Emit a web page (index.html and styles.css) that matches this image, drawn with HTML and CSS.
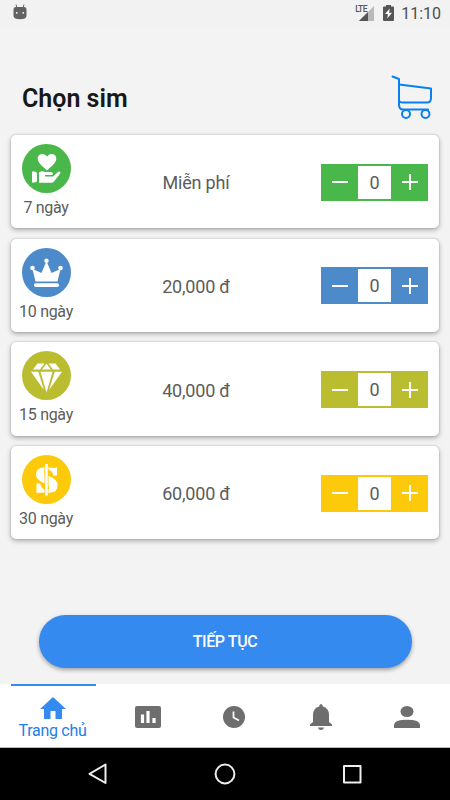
FILE: index.html
```html
<!DOCTYPE html>
<html lang="vi">
<head>
    <meta charset="UTF-8">
    <meta name="viewport" content="width=device-width, initial-scale=1.0">
    <title>Chọn sim</title>
    <link rel="stylesheet" href="styles.css">
</head>
<body>
    <div class="status-bar">
        <svg class="status-droid" width="14" height="16" viewBox="0 0 14 16">
            <path d="M3 0.500L4 4M11 0.500L10 4" stroke="#666" stroke-width="1"></path>
            <path d="M0.500 5Q0.500 3 3 3H11Q13.500 3 13.500 5V12Q13 15.200 7 15.200Q1 15.200 0.500 12Z" fill="#626262"></path>
            <circle cx="3.800" cy="8.800" r="0.900" fill="#fff"></circle>
            <circle cx="10.200" cy="8.800" r="0.900" fill="#fff"></circle>
        </svg>
        <div class="status-right">
            <span class="lte">LTE</span>
            <svg class="signal" width="15" height="15" viewBox="0 0 15 15">
                <path d="M0 15L15 0V15Z" fill="#b9b9b9"></path>
                <path d="M0 15L9 6V15Z" fill="#555"></path>
            </svg>
            <svg class="battery" width="11" height="16" viewBox="0 0 11 16">
                <path d="M3 0H8V1.600H10Q11 1.600 11 2.600V15Q11 16 10 16H1Q0 16 0 15V2.600Q0 1.600 1 1.600H3Z" fill="#555"></path>
                <path d="M6.800 3.500L2 9H5L4.200 13.500L9 7.800H6Z" fill="#fff"></path>
            </svg>
            <span class="clock">11:10</span>
        </div>
    </div>

    <div class="page-header">
        <h1 class="page-title">Chọn sim</h1>
        <svg class="cart" width="42" height="45" viewBox="0 0 42 45" fill="none" stroke="#0a80f0" stroke-width="2" stroke-linecap="round" stroke-linejoin="round">
            <path d="M1.500 1.500L8 4V29.500Q8 34.500 12 34.500H37"></path>
            <path d="M8 9.500L40 13.500V23Q40 27.500 36 27.500H12Q8 27.500 8 25"></path>
            <circle cx="15" cy="39" r="4"></circle>
            <circle cx="34.500" cy="39" r="4"></circle>
        </svg>
    </div>

    <div class="sim-list">
        <div class="sim-card green">
            <div class="sim-plan">
                <svg class="sim-icon" width="49" height="49" viewBox="0 0 49 49">
                    <circle cx="24.500" cy="24.500" r="24.500" fill="currentColor"></circle>
                    <path d="M25 26.500C21 22.500 15.700 19 15.700 14.500C15.700 9.500 22 8.500 25 12.500C28 8.500 34.300 9.500 34.300 14.500C34.300 19 29 22.500 25 26.500Z" fill="#fff"></path>
                    <path d="M10 27.500H12.500Q15 27.500 15 30V36Q15 38.500 12.500 38.500H10Z" fill="#fff"></path>
                    <path d="M17 28.500Q20 26.500 23 28H29Q31 28 31 29.500Q31 31 29 31H23V32.500H31L36 28Q37.500 27 38.500 28.500Q38.500 29.500 37.500 30.500L32 37.500Q31 38.700 29.500 38.700H17Z" fill="#fff"></path>
                </svg>
                <span class="sim-days">7 ngày</span>
            </div>
            <div class="sim-price">Miễn phí</div>
            <div class="stepper">
                <button class="step minus"></button>
                <span class="count">0</span>
                <button class="step plus"></button>
            </div>
        </div>

        <div class="sim-card blue">
            <div class="sim-plan">
                <svg class="sim-icon" width="49" height="49" viewBox="0 0 49 49">
                    <circle cx="24.500" cy="24.500" r="24.500" fill="currentColor"></circle>
                    <path d="M13.500 33.500L10.500 21L19.500 25L24.500 13L29.500 25L38.500 21L35.500 33.500Z" fill="#fff"></path>
                    <circle cx="24.500" cy="12.800" r="2.200" fill="#fff"></circle>
                    <circle cx="10.500" cy="20" r="2.300" fill="#fff"></circle>
                    <circle cx="38.500" cy="20" r="2.300" fill="#fff"></circle>
                    <rect x="12" y="35.300" width="25" height="3.800" rx="1.800" fill="#fff"></rect>
                </svg>
                <span class="sim-days">10 ngày</span>
            </div>
            <div class="sim-price">20,000 đ</div>
            <div class="stepper">
                <button class="step minus"></button>
                <span class="count">0</span>
                <button class="step plus"></button>
            </div>
        </div>

        <div class="sim-card olive">
            <div class="sim-plan">
                <svg class="sim-icon" width="49" height="49" viewBox="0 0 49 49">
                    <circle cx="24.500" cy="24.500" r="24.500" fill="currentColor"></circle>
                    <g fill="#fff">
                        <path d="M15.500 12.500H22.500L18 18.500H11Z"></path>
                        <path d="M26.500 12.500H33.500L38 18.500H31Z"></path>
                        <path d="M24.500 12.800L29 18.500H20Z"></path>
                        <path d="M9 20.700H16.300L22 39Z"></path>
                        <path d="M18.500 20.700H30.500L24.500 41.500Z"></path>
                        <path d="M32.700 20.700H40L27 39Z"></path>
                    </g>
                </svg>
                <span class="sim-days">15 ngày</span>
            </div>
            <div class="sim-price">40,000 đ</div>
            <div class="stepper">
                <button class="step minus"></button>
                <span class="count">0</span>
                <button class="step plus"></button>
            </div>
        </div>

        <div class="sim-card yellow">
            <div class="sim-plan">
                <svg class="sim-icon" width="49" height="49" viewBox="0 0 49 49">
                    <circle cx="24.500" cy="24.500" r="24.500" fill="currentColor"></circle>
                    <path d="M35 12.500V20.500H31.500Q30 15 25 14.500Q21.500 15 22 17.500Q23 19.500 29 22Q35.500 25 35.500 30Q35.500 37.500 29 37.500Q25 38.500 21 37.500Q18 37.500 14.500 38V28.500H18Q19.500 34.500 24.500 35Q27.500 34.500 27 32Q26 30 20.500 27.500Q14 24.500 14 19Q14.500 12.500 21 12.500Q25 11.500 29 12.800Q32 13.200 35 12.500Z" fill="#fff"></path>
                    <path d="M24.500 9V40.500" stroke="currentColor" stroke-width="4"></path>
                    <path d="M24.500 9V40.500" stroke="#fff" stroke-width="2.400"></path>
                </svg>
                <span class="sim-days">30 ngày</span>
            </div>
            <div class="sim-price">60,000 đ</div>
            <div class="stepper">
                <button class="step minus"></button>
                <span class="count">0</span>
                <button class="step plus"></button>
            </div>
        </div>
    </div>

    <button class="continue-button">TIẾP TỤC</button>

    <div class="tab-bar">
        <div class="tab active">
            <svg width="26" height="22" viewBox="0 0 26 22" fill="currentColor">
                <path d="M13 0L26 12H22V22H15.500V14H10.500V22H4V12H0Z"></path>
            </svg>
            <span class="tab-label">Trang chủ</span>
        </div>
        <div class="tab">
            <svg width="26" height="22" viewBox="0 0 26 22">
                <rect width="26" height="22" rx="2" fill="currentColor"></rect>
                <path d="M7.500 8.500V17M13 5V17M19 12V17" stroke="#fff" stroke-width="3.200"></path>
            </svg>
        </div>
        <div class="tab">
            <svg width="22" height="22" viewBox="0 0 22 22">
                <circle cx="11" cy="11" r="11" fill="currentColor"></circle>
                <path d="M10.500 5.500V11.500L16 14.500" fill="none" stroke="#fff" stroke-width="1.700"></path>
            </svg>
        </div>
        <div class="tab">
            <svg width="22" height="26" viewBox="0 0 22 26" fill="currentColor">
                <path d="M9.200 2.500Q9.200 0 11 0Q12.800 0 12.800 2.500Q19 4 19 11V18L22 20.500V22H0V20.500L3 18V11Q3 4 9.200 2.500Z"></path>
                <path d="M8 23.500H14Q13.500 26 11 26Q8.500 26 8 23.500Z"></path>
            </svg>
        </div>
        <div class="tab">
            <svg width="26" height="22" viewBox="0 0 26 22" fill="currentColor">
                <ellipse cx="13" cy="5.500" rx="6.500" ry="5.500"></ellipse>
                <path d="M0 22V19Q0 13.800 13 13.800Q26 13.800 26 19V22Z"></path>
            </svg>
        </div>
    </div>

    <div class="nav-bar">
        <svg width="20" height="22" viewBox="0 0 20 22" fill="none" stroke="#eee" stroke-width="2" stroke-linejoin="round">
            <path d="M17.500 1.500V20L1.500 10.800Z"></path>
        </svg>
        <svg width="22" height="22" viewBox="0 0 22 22" fill="none" stroke="#eee" stroke-width="2">
            <circle cx="11" cy="11" r="9.400"></circle>
        </svg>
        <svg width="20" height="20" viewBox="0 0 20 20" fill="none" stroke="#eee" stroke-width="2" stroke-linejoin="round">
            <rect x="2" y="2" width="16.500" height="16.500"></rect>
        </svg>
    </div>
</body>
</html>
```
FILE: styles.css
```css
* {
    box-sizing: border-box;
}
body {
    margin: 0;
    height: 800px;
    display: flex;
    flex-direction: column;
    overflow: hidden;
    background-color: #f3f3f3;
    font-family: Roboto, sans-serif;
    color: #5c5c5c;
}
svg {
    display: block;
    flex-shrink: 0;
}
button {
    border: none;
    padding: 0;
    font-family: inherit;
    cursor: pointer;
}

/* status bar */
.status-bar {
    height: 27px;
    padding: 4px 9px 0 13px;
    display: flex;
    justify-content: space-between;
    align-items: flex-start;
    background-color: #f2f2f2;
}
.status-right {
    display: flex;
    align-items: flex-start;
}
.lte {
    width: 4px;
    margin-top: 1px;
    font-size: 8.5px;
    line-height: 8px;
    font-weight: 500;
    color: #555;
    letter-spacing: -0.6px;
}
.signal {
    margin-top: 2px;
}
.battery {
    margin: 1px 7px 0 9px;
}
.clock {
    font-size: 16px;
    line-height: 20px;
    color: #4d4d4d;
}

/* header */
.page-header {
    height: 108px;
    padding: 48px 17px 0 22px;
    display: flex;
    justify-content: space-between;
    align-items: flex-start;
}
.page-title {
    margin: 9px 0 0;
    font-size: 25px;
    line-height: 30px;
    font-weight: 600;
    color: #161819;
}

/* sim cards */
.sim-list {
    padding: 0 11px;
    display: flex;
    flex-direction: column;
    gap: 10.4px;
}
.sim-card {
    height: 93.3px;
    padding: 0 11px 0 0;
    display: flex;
    align-items: center;
    background-color: #fff;
    border-radius: 5px;
    box-shadow: 0 2px 5px rgba(0, 0, 0, 0.3), 0 0 2px rgba(0, 0, 0, 0.2);
}
.sim-plan {
    width: 70px;
    height: 100%;
    padding-top: 9px;
    display: flex;
    flex-direction: column;
    align-items: center;
}
.sim-days {
    margin-top: 5px;
    font-size: 16px;
    line-height: 20px;
    letter-spacing: -0.3px;
}
.sim-price {
    width: 230px;
    padding-top: 2px;
    text-align: center;
    font-size: 18px;
    letter-spacing: -0.2px;
}
.stepper {
    width: 107px;
    height: 37px;
    margin-left: auto;
    margin-top: 1px;
    padding: 2px 0;
    display: flex;
    background-color: currentColor;
}
.step {
    flex: 1;
    background: linear-gradient(#fff, #fff) center / 16px 2px no-repeat;
}
.plus {
    background: linear-gradient(#fff, #fff) center / 16px 2px no-repeat, linear-gradient(#fff, #fff) center / 2px 16px no-repeat;
}
.count {
    width: 33px;
    background-color: #fff;
    text-align: center;
    font-size: 18px;
    line-height: 34px;
    color: #5c5c5c;
}
.green .sim-icon, .green .stepper {
    color: #49b749;
}
.blue .sim-icon, .blue .stepper {
    color: #4c8aca;
}
.olive .sim-icon, .olive .stepper {
    color: #bbbd30;
}
.yellow .sim-icon, .yellow .stepper {
    color: #fdca0b;
}

.continue-button {
    width: 373px;
    height: 53px;
    margin: 75.6px auto 15.8px;
    padding-top: 1px;
    flex-shrink: 0;
    border-radius: 27px;
    background-color: #348aef;
    box-shadow: 0 2px 4px rgba(0, 0, 0, 0.35);
    color: #fff;
    font-size: 16px;
    font-weight: 500;
    letter-spacing: -0.4px;
}

/* bottom tabs */
.tab-bar {
    height: 64px;
    padding-left: 11px;
    display: flex;
    background-color: #fff;
    border-bottom: 1px solid #bbb;
    color: #6e6e6e;
}
.tab {
    width: 86.3px;
    padding-top: 2px;
    display: flex;
    flex-direction: column;
    flex-shrink: 0;
    align-items: center;
    justify-content: center;
    border-top: 2px solid transparent;
}
.tab.active {
    width: 85px;
    margin-right: 9px;
    justify-content: flex-start;
    padding: 11px 2px 0 0;
    border-top-color: #348aef;
    color: #348aef;
}
.tab-label {
    margin-top: 2px;
    font-size: 16px;
    line-height: 20px;
    letter-spacing: -0.3px;
    color: #1e7ceb;
}

/* system navigation */
.nav-bar {
    flex: 1;
    display: flex;
    align-items: center;
    justify-content: space-between;
    padding: 0 88px;
    background-color: #000;
}
```
